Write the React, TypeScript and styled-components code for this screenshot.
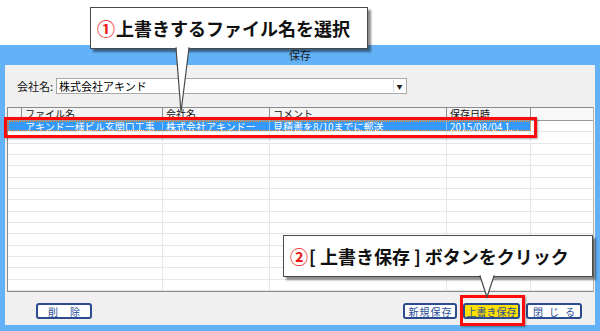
import React from 'react'
import styled, {createGlobalStyle} from 'styled-components'

const GlobalStyle = createGlobalStyle`
  html, body {
    margin: 0;
    padding: 0;
    background: #fff;
  }
  body {
    font-family: 'Noto Sans CJK JP', 'Noto Sans', sans-serif;
  }
`

const uiFont = `'Noto Sans CJK JP', 'Noto Sans', sans-serif`

const Page = styled.div`
  position: relative;
  width: 600px;
  height: 331px;
  overflow: hidden;
  background: #fff;
  display: flex;
  flex-direction: column;
  padding-top: 45px;
  box-sizing: border-box;
`

const Window = styled.div`
  flex: 1;
  min-height: 0;
  background: #63b1f6;
  display: flex;
  flex-direction: column;
  padding: 0 5px 6px;
`

const TitleBar = styled.div`
  height: 20px;
  display: flex;
  align-items: center;
  justify-content: center;
  font-family: ${uiFont};
  font-size: 11px;
  color: #1e1e1e;
`

const Panel = styled.div`
  flex: 1;
  min-height: 0;
  background: #f0f0f0;
  display: flex;
  flex-direction: column;
  padding: 13px 1px 6px 2px;
  box-sizing: border-box;
`

const CompanyRow = styled.div`
  display: flex;
  align-items: center;
  height: 16px;
  padding-left: 10px;
  gap: 3px;
  font-family: ${uiFont};
  font-size: 11px;
  color: #111;
`

const Select = styled.div`
  width: 351px;
  height: 16px;
  box-sizing: border-box;
  background: #fff;
  border: 1px solid #a9a9a9;
  display: flex;
  align-items: center;
  padding-left: 2px;
  font-size: 11px;
  color: #000;
`

const SelectValue = styled.span`
  flex: 1;
`

const SelectArrow = styled.span`
  width: 11px;
  height: 12px;
  margin-right: 1px;
  display: flex;
  align-items: center;
  justify-content: center;
  border-left: 1px solid #dcdcdc;
  font-size: 6px;
  color: #222;
`

const Table = styled.div`
  flex: 1;
  min-height: 0;
  margin-top: 13px;
  background: #fff;
  border: 1px solid #8a8a8a;
  border-right-color: #b8b8b8;
  display: flex;
  flex-direction: column;
  overflow: hidden;
  font-family: ${uiFont};
  font-size: 10px;
`

const COLS = [14, 141, 107, 177, 84]

const HeaderRow = styled.div`
  display: flex;
  height: 12px;
  flex-shrink: 0;
  background: #f4f4f4;
  border-bottom: 1px solid #9a9a9a;
`

const HeaderCell = styled.div<{$w?: number}>`
  ${(p) => (p.$w ? `width: ${p.$w}px;` : 'flex: 1;')}
  box-sizing: border-box;
  flex-shrink: 0;
  border-right: 1px solid #8c8c8c;
  padding-left: 3px;
  line-height: 12px;
  color: #111;
  white-space: nowrap;
  &:last-child {
    border-right: none;
    background: #f9f9f9;
  }
`

const Row = styled.div`
  display: flex;
  height: 11.333px;
  flex-shrink: 0;
  border-bottom: 1px solid #e6e6e6;
  box-sizing: border-box;
`

const RowMain = styled.div<{$selected?: boolean}>`
  display: flex;
  width: ${COLS.reduce((a, b) => a + b, 0)}px;
  flex-shrink: 0;
  background: ${(p) => (p.$selected ? '#3399ff' : 'transparent')};
  color: ${(p) => (p.$selected ? '#fff' : '#000')};
  outline: ${(p) => (p.$selected ? '1px dotted #ff8a1c' : 'none')};
  outline-offset: -1px;
`

const Cell = styled.div<{$w: number; $selected?: boolean}>`
  width: ${(p) => p.$w}px;
  box-sizing: border-box;
  flex-shrink: 0;
  padding-left: 3px;
  line-height: 11px;
  white-space: nowrap;
  border-right: 1px solid ${(p) => (p.$selected ? '#8cc4ff' : '#e6e6e6')};
  &:first-child {
    border-right: none;
  }
`

const RowTail = styled.div`
  flex: 1;
`

const ButtonBar = styled.div`
  display: flex;
  align-items: center;
  margin-top: 11px;
  height: 16px;
  padding: 0 12px 0 29px;
  gap: 6px;
`

const Spacer = styled.div`
  flex: 1;
`

const Button = styled.div<{$primary?: boolean; $w: number; $spacing: number}>`
  width: ${(p) => p.$w}px;
  height: 16px;
  box-sizing: border-box;
  border: 2px solid #2c4a8e;
  border-radius: 3px;
  background: ${(p) => (p.$primary ? '#ffe100' : '#fff')};
  color: #2a4b96;
  display: flex;
  align-items: center;
  justify-content: center;
  font-family: ${uiFont};
  font-size: 10px;
  letter-spacing: ${(p) => p.$spacing}px;
  text-indent: ${(p) => p.$spacing}px;
  white-space: nowrap;
`

const Callout = styled.div<{$x: number; $y: number; $w: number}>`
  position: absolute;
  left: ${(p) => p.$x}px;
  top: ${(p) => p.$y}px;
  width: ${(p) => p.$w}px;
  height: 42px;
  box-sizing: border-box;
  background: #fff;
  border: 1px solid #4a4a4a;
  box-shadow: 3px 3px 2px rgba(0, 0, 0, 0.45);
  display: flex;
  align-items: center;
  padding-left: 6px;
  font-family: ${uiFont};
  font-weight: 700;
  font-size: 18px;
  color: #111;
  white-space: nowrap;
  z-index: 3;
`

const Num = styled.span`
  color: #f01818;
  margin-right: 1px;
`

const Tail = styled.svg`
  position: absolute;
  left: 0;
  top: 0;
  z-index: 4;
  overflow: visible;
  pointer-events: none;
`

const Mark = styled.div<{$x: number; $y: number; $w: number; $h: number}>`
  position: absolute;
  left: ${(p) => p.$x}px;
  top: ${(p) => p.$y}px;
  width: ${(p) => p.$w}px;
  height: ${(p) => p.$h}px;
  box-sizing: border-box;
  border: 3px solid #ff0a0a;
  box-shadow: 1px 1px 2px rgba(0, 0, 0, 0.35);
  z-index: 2;
`

const headers = ['', 'ファイル名', '会社名', 'コメント', '保存日時']
const selectedRow = [
  '',
  'アキンドー様ビル玄関口工事',
  '株式会社アキンドー',
  '見積書を8/10までに郵送',
  '2015/08/04 1...',
]

export default function App() {
  const emptyRows = Array.from({length: 14})
  return (
    <>
      <GlobalStyle />
      <Page>
        <Window>
          <TitleBar>保存</TitleBar>
          <Panel>
            <CompanyRow>
              <span>会社名:</span>
              <Select>
                <SelectValue>株式会社アキンド</SelectValue>
                <SelectArrow>▼</SelectArrow>
              </Select>
            </CompanyRow>
            <Table>
              <HeaderRow>
                {headers.map((h, i) => (
                  <HeaderCell key={i} $w={COLS[i]}>
                    {h}
                  </HeaderCell>
                ))}
                <HeaderCell />
              </HeaderRow>
              <Row>
                <RowMain $selected>
                  {selectedRow.map((t, i) => (
                    <Cell key={i} $w={COLS[i]} $selected>
                      {t}
                    </Cell>
                  ))}
                </RowMain>
                <RowTail />
              </Row>
              {emptyRows.map((_, r) => (
                <Row key={r}>
                  <RowMain>
                    {COLS.map((w, i) => (
                      <Cell key={i} $w={w} />
                    ))}
                  </RowMain>
                  <RowTail />
                </Row>
              ))}
            </Table>
            <ButtonBar>
              <Button $w={56} $spacing={12}>
                削除
              </Button>
              <Spacer />
              <Button $w={54} $spacing={1}>
                新規保存
              </Button>
              <Button $w={57} $spacing={0} $primary>
                上書き保存
              </Button>
              <Button $w={56} $spacing={6}>
                閉じる
              </Button>
            </ButtonBar>
          </Panel>
        </Window>

        <Mark $x={4} $y={117} $w={533} $h={21} />
        <Mark $x={460} $y={295} $w={65} $h={31} />

        <Callout $x={90} $y={7} $w={278}>
          <Num>①</Num>上書きするファイル名を選択
        </Callout>
        <Callout $x={283} $y={235} $w={310}>
          <Num>②</Num>[ 上書き保存 ] ボタンをクリック
        </Callout>

        <Tail width="600" height="331">
          <polygon points="176,48 189,48 181,112" fill="#fff" stroke="#4a4a4a" strokeWidth="1.2" />
          <rect x="177" y="46" width="11" height="3" fill="#fff" />
          <polygon points="480,276 494,276 487,297" fill="#fff" stroke="#4a4a4a" strokeWidth="1.2" />
          <rect x="481" y="274" width="12" height="3" fill="#fff" />
        </Tail>
      </Page>
    </>
  )
}
